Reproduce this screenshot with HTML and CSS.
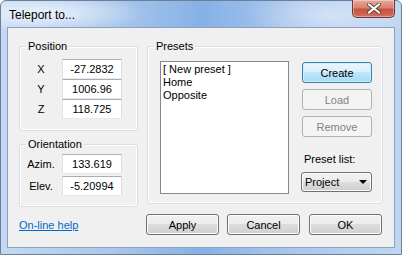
FILE: index.html
```html
<!DOCTYPE html>
<html lang="en">
<head>
  <meta charset="UTF-8" />
  <title>Teleport to...</title>
  <link rel="stylesheet" href="styles.css">
</head>
<body>

  <div class="window">
    <div class="titlebar">
      <span class="title">Teleport to...</span>
      <button class="close-btn" aria-label="Close">
        <svg width="14" height="11" viewBox="0 0 14 11">
          <path d="M2 1.5 L12 9.5 M12 1.5 L2 9.5" stroke="#4a3f3f" stroke-width="3.6" stroke-linecap="square" fill="none"/>
          <path d="M2 1.5 L12 9.5 M12 1.5 L2 9.5" stroke="#fff" stroke-width="2" stroke-linecap="square" fill="none"/>
        </svg>
      </button>
    </div>

    <div class="client">
      <div class="top-row">
        <div class="left-col">
          <div class="group position">
            <span class="group-title">Position</span>
            <div class="fields">
              <label>X</label><input class="field" type="text" value="-27.2832">
              <label>Y</label><input class="field" type="text" value="1006.96">
              <label>Z</label><input class="field" type="text" value="118.725">
            </div>
          </div>

          <div class="group orientation">
            <span class="group-title">Orientation</span>
            <div class="fields">
              <label>Azim.</label><input class="field" type="text" value="133.619">
              <label>Elev.</label><input class="field" type="text" value="-5.20994">
            </div>
          </div>
        </div>

        <div class="group presets">
          <span class="group-title">Presets</span>
          <div class="presets-body">
            <ul class="listbox">
              <li>[ New preset ]</li>
              <li>Home</li>
              <li>Opposite</li>
            </ul>
            <div class="preset-actions">
              <button class="btn default">Create</button>
              <button class="btn" disabled>Load</button>
              <button class="btn" disabled>Remove</button>
              <span class="list-label">Preset list:</span>
              <div class="combo">
                <span>Project</span>
                <svg width="8" height="4" viewBox="0 0 8 4"><polygon points="0,0 8,0 4,4" fill="#000"/></svg>
              </div>
            </div>
          </div>
        </div>
      </div>

      <div class="footer">
        <a href="#" class="help-link">On-line help</a>
        <div class="footer-buttons">
          <button class="btn">Apply</button>
          <button class="btn">Cancel</button>
          <button class="btn ok">OK</button>
        </div>
      </div>
    </div>
  </div>

</body>
</html>
```

FILE: styles.css
```css
body {
  margin: 0;
  padding: 0;
  background: #fff;
  font-family: "Liberation Sans", Arial, sans-serif;
  font-size: 11px;
  color: #000;
}
.window {
  width: 402px;
  height: 255px;
  box-sizing: border-box;
  border: 1px solid #6d7f97;
  border-radius: 6px 6px 0 0;
  padding: 0 6px 7px 6px;
  background:
    radial-gradient(ellipse 150px 28px at 40px 12px, rgba(255,255,255,0.75), rgba(255,255,255,0) 70%),
    radial-gradient(ellipse 120px 40px at 330px 14px, rgba(255,255,255,0.45), rgba(255,255,255,0) 70%),
    linear-gradient(90deg, #c3d8f2 0%, #aac7ec 28%, #86b1e6 50%, #a8c6ec 72%, #bed6f2 100%);
}
.titlebar {
  height: 26px;
  display: flex;
  justify-content: space-between;
  align-items: flex-start;
}
.title {
  font-size: 12px;
  margin: 7px 0 0 2px;
  line-height: 14px;
}
.close-btn {
  width: 43px;
  height: 18px;
  margin-top: -1px;
  padding: 0;
  border: 1px solid #6b3a36;
  border-top: none;
  border-radius: 0 0 5px 5px;
  background: linear-gradient(#e9a99c 0%, #d88170 45%, #c7503f 55%, #d0705c 100%);
  box-shadow: inset 0 0 0 1px rgba(255,255,255,0.35);
  display: flex;
  align-items: center;
  justify-content: center;
}
.client {
  height: 221px;
  box-sizing: border-box;
  border: 1px solid #8ca1bd;
  background: #f0f0f0;
  padding: 18px 11px 0 11px;
}
.top-row {
  display: flex;
  align-items: flex-start;
  gap: 9px;
}
.left-col {
  width: 119px;
  display: flex;
  flex-direction: column;
  gap: 13px;
}
.group {
  position: relative;
  border: 1px solid #d5dfe5;
  border-radius: 3px;
  box-shadow: inset 0 0 0 1px #fff;
  box-sizing: border-box;
}
.group-title {
  position: absolute;
  top: -7px;
  left: 6px;
  padding: 0 2px;
  line-height: 13px;
  background: #f0f0f0;
}
.fields {
  display: grid;
  grid-template-columns: 42px 60px;
  align-items: center;
}
.fields label {
  text-align: center;
}
.position .fields {
  padding: 12px 0 11px 0;
  row-gap: 0;
}
.orientation .fields {
  padding: 9px 0 10px 0;
  row-gap: 2px;
}
.field {
  width: 60px;
  height: 20px;
  box-sizing: border-box;
  margin: 0;
  padding: 0;
  border: 1px solid;
  border-color: #abadb3 #dbdfe6 #e3e9ef #e2e3ea;
  background: #fff;
  font-family: inherit;
  font-size: 11px;
  color: #000;
  text-align: center;
}
.presets {
  width: 236px;
  height: 158px;
}
.presets-body {
  display: flex;
  gap: 13px;
  padding: 14px 9px 9px 12px;
  height: 100%;
  box-sizing: border-box;
}
.listbox {
  width: 129px;
  margin: 0;
  padding: 1px 2px;
  list-style: none;
  background: #fff;
  border: 1px solid #828790;
  box-sizing: border-box;
  line-height: 13px;
}
.preset-actions {
  flex: 1;
  display: flex;
  flex-direction: column;
  gap: 6px;
  padding-top: 1px;
  padding-bottom: 2px;
}
.btn {
  height: 21px;
  padding: 0;
  border: 1px solid #707070;
  border-radius: 3px;
  background: linear-gradient(#f2f2f2 0%, #ebebeb 50%, #dddddd 50%, #cfcfcf 100%);
  box-shadow: inset 0 0 0 1px #fcfcfc;
  font-family: inherit;
  font-size: 11px;
  color: #000;
}
.preset-actions .btn {
  width: 70px;
}
.btn.default {
  border-color: #3c7fb1;
  background: linear-gradient(#eaf6fd 0%, #d9f0fc 50%, #bee6fd 50%, #a7d9f5 100%);
  box-shadow: inset 0 0 0 1px #cfeefc;
}
.btn:disabled {
  border-color: #adb2b5;
  background: #f4f4f4;
  box-shadow: none;
  color: #838383;
}
.list-label {
  margin-top: auto;
  margin-left: 2px;
  line-height: 13px;
}
.combo {
  width: 71px;
  height: 20px;
  margin-left: -1px;
  box-sizing: border-box;
  border: 1px solid #707070;
  border-radius: 3px;
  background: linear-gradient(#f2f2f2 0%, #ebebeb 50%, #dddddd 50%, #cfcfcf 100%);
  box-shadow: inset 0 0 0 1px #fcfcfc;
  display: flex;
  align-items: center;
  justify-content: space-between;
  padding: 0 4px 0 3px;
}
.footer {
  display: flex;
  align-items: center;
  justify-content: space-between;
  margin-top: 7px;
  padding-right: 1px;
}
.help-link {
  color: #0066cc;
  text-decoration: underline;
}
.footer-buttons {
  display: flex;
  gap: 8px;
}
.footer-buttons .btn {
  width: 73px;
}
.footer-buttons .ok {
  margin-left: 1px;
}
```
